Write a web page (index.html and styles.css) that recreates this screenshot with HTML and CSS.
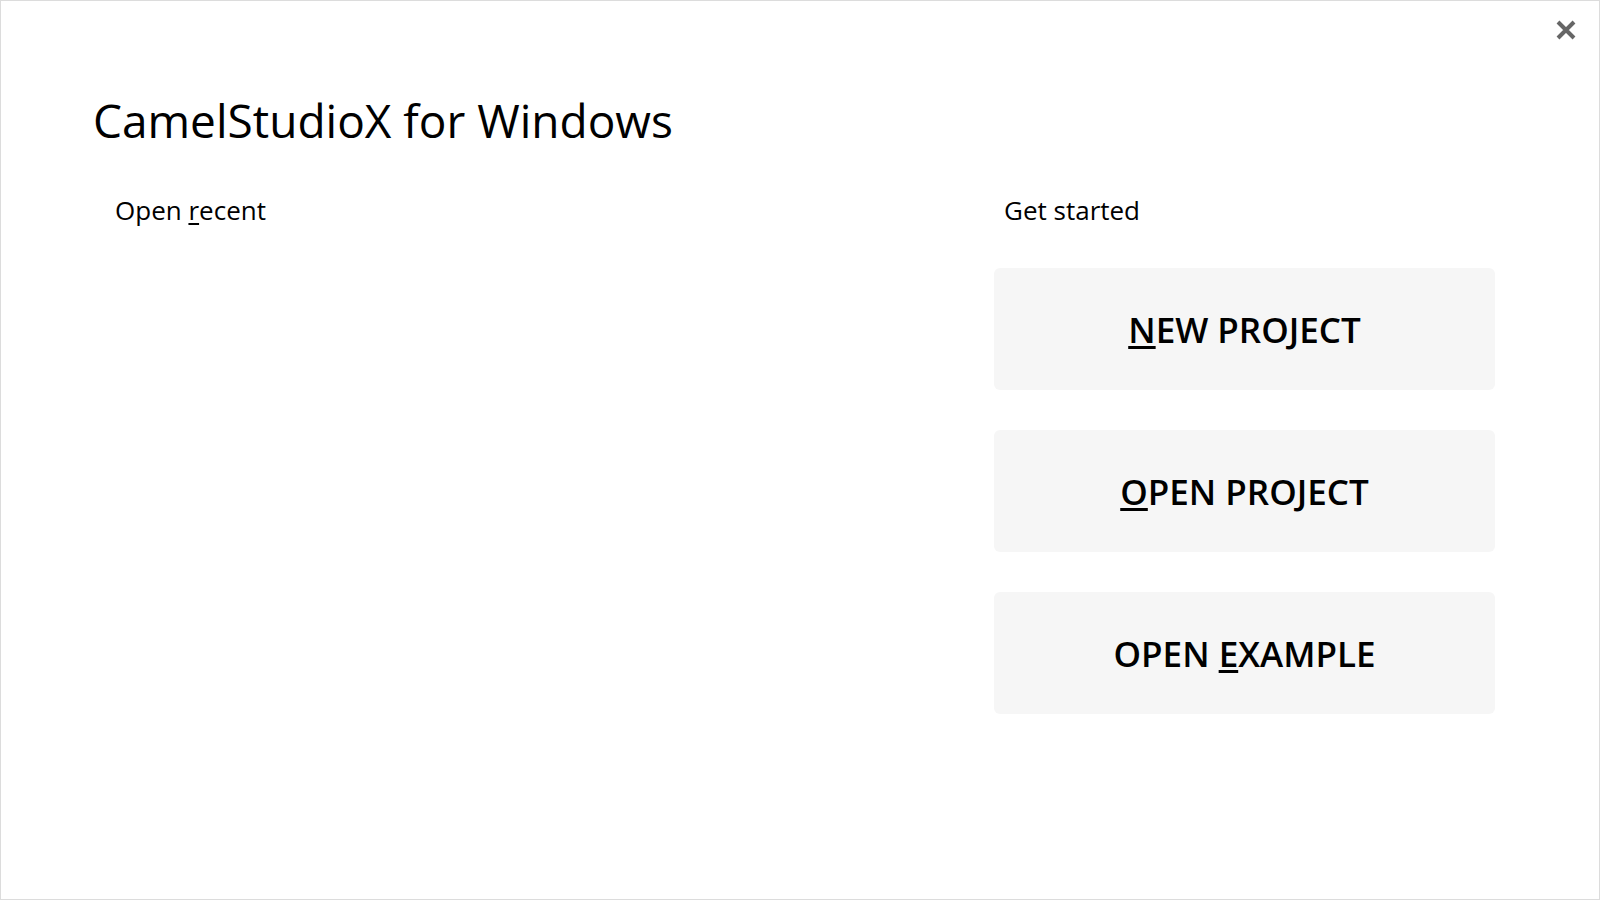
FILE: index.html
```html
<!DOCTYPE html>
<html lang="en">
<head>
<meta charset="utf-8">
<title>CamelStudioX for Windows</title>
<link rel="stylesheet" href="styles.css">
</head>
<body>
<div class="window">
  <button class="close" aria-label="Close">
    <svg width="20" height="20" viewBox="0 0 20 20"><path d="M2 2 L18 18 M18 2 L2 18" stroke="#666" stroke-width="4" fill="none"/></svg>
  </button>
  <h1 class="title">CamelStudioX for Windows</h1>
  <div class="columns">
    <section class="recent">
      <h2 class="label">Open <u>r</u>ecent</h2>
    </section>
    <section class="start">
      <h2 class="label">Get started</h2>
      <div class="actions">
        <button class="action"><span><u>N</u>EW PROJECT</span></button>
        <button class="action"><span><u>O</u>PEN PROJECT</span></button>
        <button class="action"><span>OPEN <u>E</u>XAMPLE</span></button>
      </div>
    </section>
  </div>
</div>
</body>
</html>
```
FILE: styles.css
```css
html, body {
  margin: 0;
  padding: 0;
  background: #fff;
}
body {
  font-family: "Open Sans", "Noto Sans", sans-serif;
  color: #000;
}
.window {
  position: relative;
  width: 1600px;
  height: 900px;
  box-sizing: border-box;
  border: 1px solid #dcdcdc;
  background: #fff;
}
.close {
  position: absolute;
  top: 19px;
  right: 23px;
  width: 20px;
  height: 20px;
  padding: 0;
  border: 0;
  background: none;
  display: block;
}
.close svg {
  display: block;
}
.title {
  margin: 0;
  padding: 96px 0 0 92px;
  font-size: 46px;
  font-weight: 400;
  line-height: 1;
}
.columns {
  display: flex;
  margin-top: 54px;
}
.recent {
  flex: 1;
  padding-left: 114px;
}
.start {
  width: 501px;
  margin-right: 104px;
}
.label {
  margin: 0;
  font-size: 26px;
  font-weight: 400;
  line-height: 1;
}
.start .label {
  padding-left: 10px;
}
.label u {
  text-decoration-thickness: 2px;
  text-underline-offset: 3px;
}
.actions {
  display: flex;
  flex-direction: column;
  gap: 40px;
  margin-top: 45px;
}
.action {
  height: 122px;
  border: 0;
  border-radius: 6px;
  background: #f6f6f6;
  font-family: "Open Sans", "Noto Sans", sans-serif;
  font-size: 35px;
  font-weight: 600;
  line-height: 1;
  color: #000;
  display: flex;
  align-items: center;
  justify-content: center;
  padding: 0;
}
.action u {
  text-decoration-thickness: 3px;
  text-underline-offset: 3px;
}
```
